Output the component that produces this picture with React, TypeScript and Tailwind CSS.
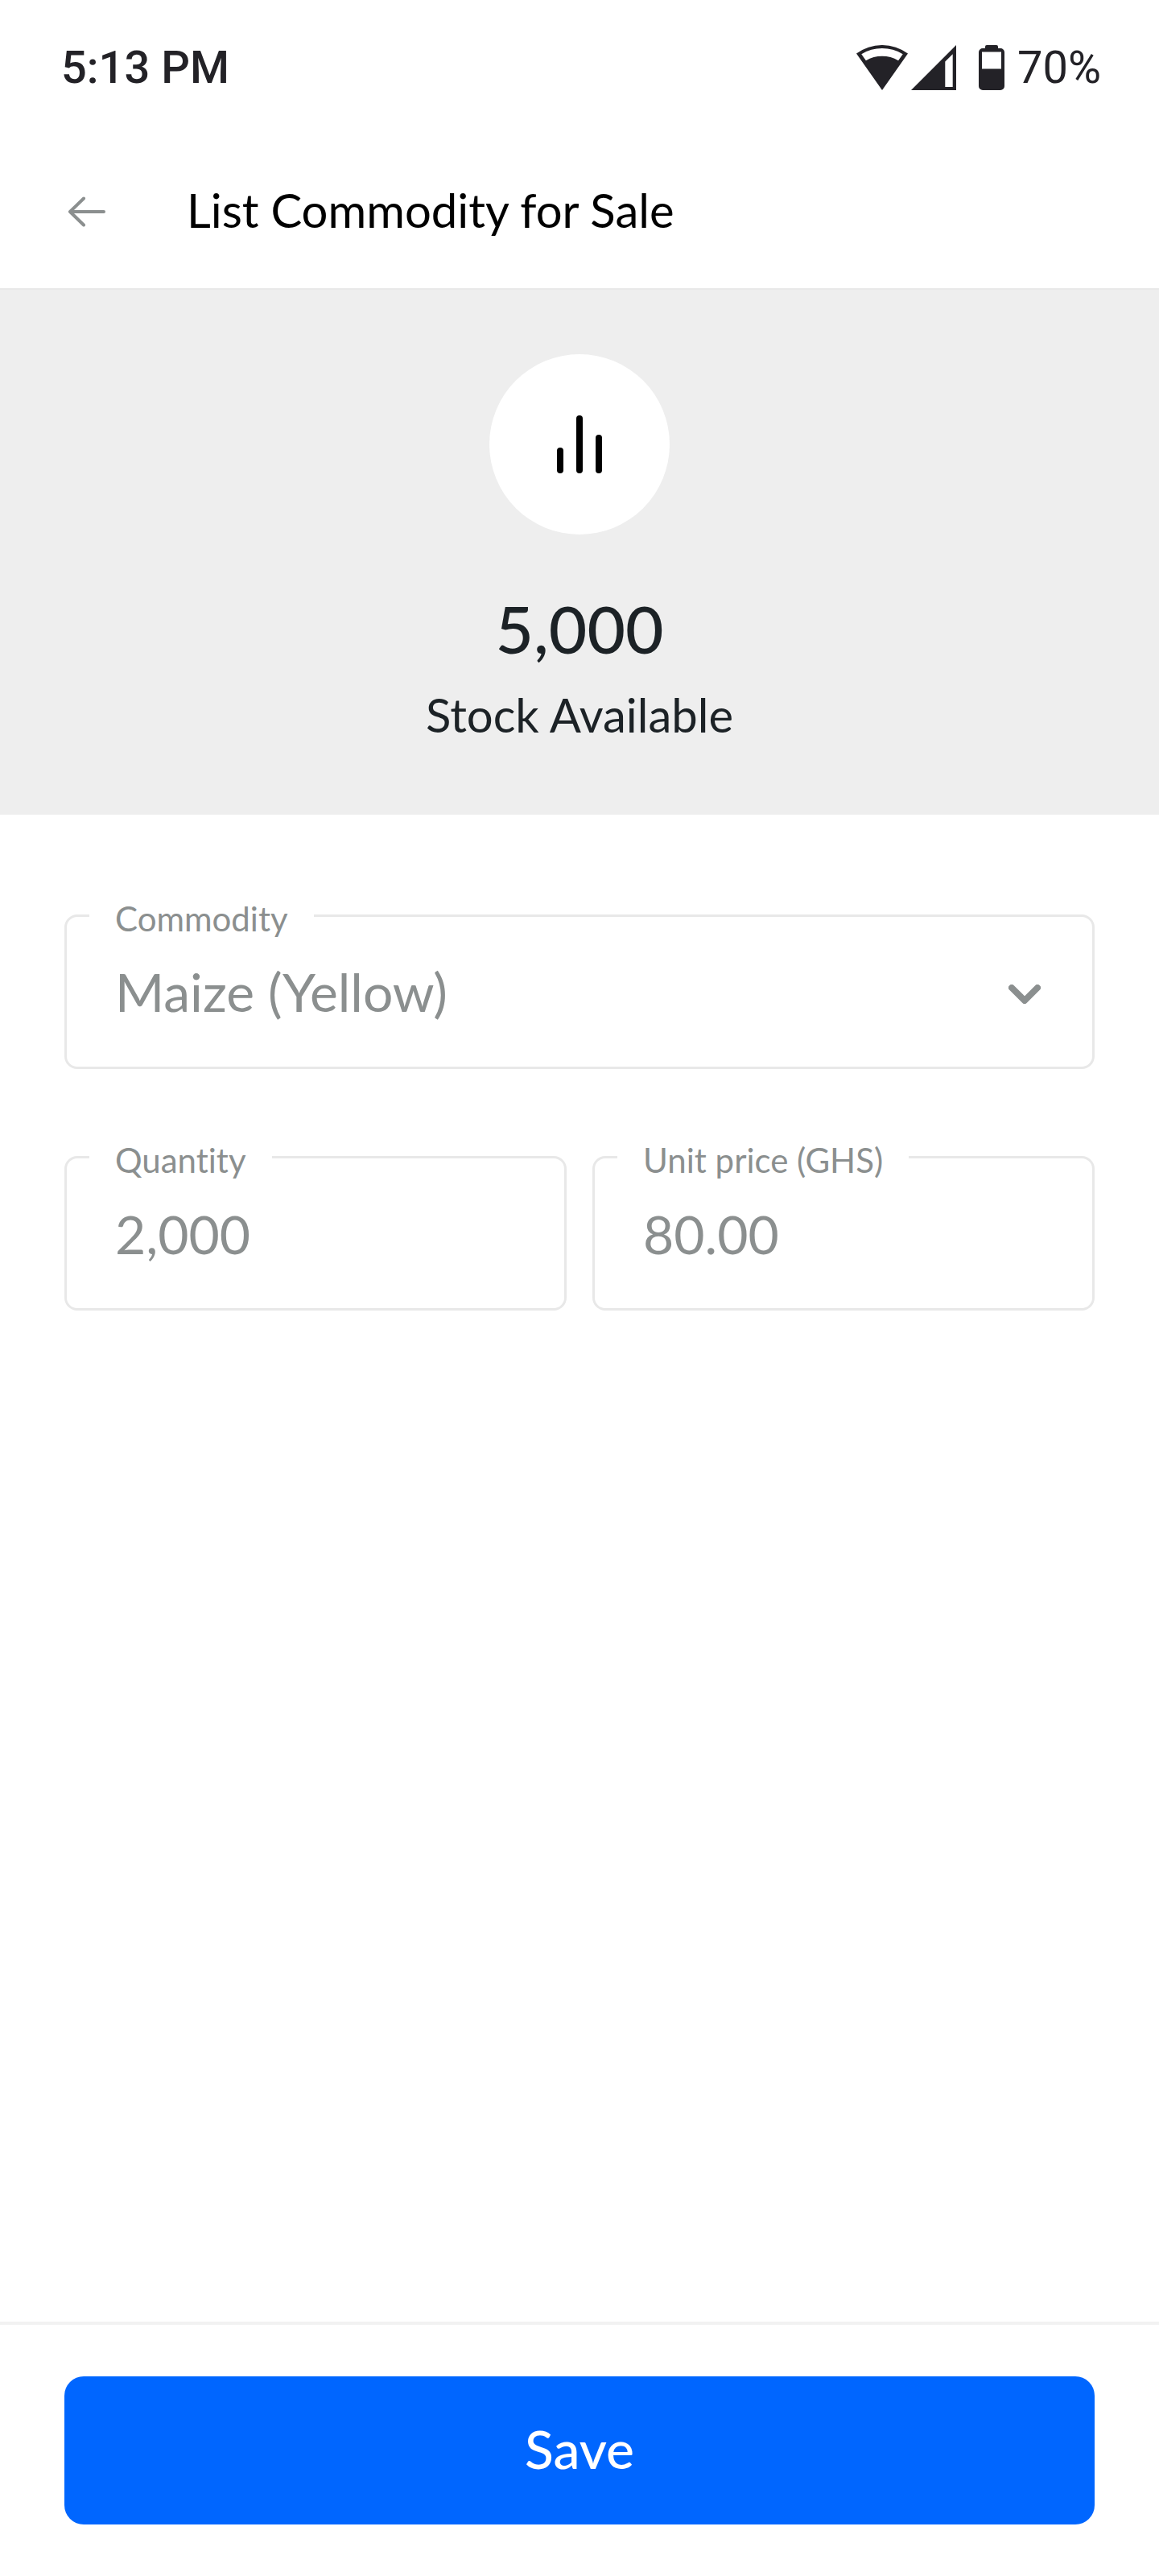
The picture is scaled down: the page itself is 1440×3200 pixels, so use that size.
import React, { useState } from "react";

const WifiIcon: React.FC = () => (
  <svg viewBox="0 0 64 56" className="w-16 h-14" fill="currentColor" aria-hidden="true">
    <path
      fillRule="evenodd"
      d="M32 56 L0 10.5 A54 54 0 0 1 64 10.5 Z M6.3 11.2 L11.9 19.2 A40 40 0 0 1 52.1 19.2 L57.7 11.2 A50 50 0 0 0 6.3 11.2 Z"
    />
  </svg>
);

const SignalIcon: React.FC = () => (
  <svg viewBox="0 0 56 56" className="w-14 h-14" fill="currentColor" aria-hidden="true">
    <path fillRule="evenodd" d="M0 56 L56 0 V56 Z M42.3 20.5 V52 H51.7 V11.2 Z" />
  </svg>
);

const BatteryIcon: React.FC = () => (
  <svg viewBox="0 0 32 56" className="w-8 h-14" fill="currentColor" aria-hidden="true">
    <path
      fillRule="evenodd"
      d="M10 0 H22 A2 2 0 0 1 24 2 V4 H27 A5 5 0 0 1 32 9 V51 A5 5 0 0 1 27 56 H5 A5 5 0 0 1 0 51 V9 A5 5 0 0 1 5 4 H8 V2 A2 2 0 0 1 10 0 Z M4 8.5 V29.5 H28 V8.5 Z"
    />
  </svg>
);

interface FieldProps {
  id: string;
  label: string;
  children: React.ReactNode;
}

const Field: React.FC<FieldProps> = ({ id, label, children }) => (
  <div className="relative flex-1 min-w-0 h-48 border-3 border-[#e8e8e8] rounded-2xl">
    <label htmlFor={id} className="absolute -top-5 left-7 px-8 bg-white text-[42px] leading-11">
      {label}
    </label>
    {children}
  </div>
);

const controlClass =
  "block w-full h-full px-15 text-[66px] leading-20 bg-transparent appearance-none outline-none";

const App: React.FC = () => {
  const [commodity, setCommodity] = useState("Maize (Yellow)");
  const [quantity, setQuantity] = useState("2,000");
  const [price, setPrice] = useState("80.00");

  return (
    <div className="min-h-screen flex flex-col bg-white font-['Lato',sans-serif] [font-variant-ligatures:none]">
      {/* Status bar */}
      <div className="h-42 pl-19 pr-18 flex items-center justify-between text-[#232227] font-['Roboto',sans-serif] text-[56px] leading-none">
        <span className="font-medium">5:13 PM</span>
        <div className="flex items-center">
          <WifiIcon />
          <div className="ml-1">
            <SignalIcon />
          </div>
          <div className="ml-7">
            <BatteryIcon />
          </div>
          <span className="ml-4">70%</span>
        </div>
      </div>

      {/* Header */}
      <header className="h-48 px-20 flex items-center border-b-2 border-[#e8e8e8]">
        <button type="button" aria-label="Back" className="text-[#8b8f8f]">
          <svg viewBox="0 0 56 56" className="w-14 h-14" fill="none" stroke="currentColor" strokeWidth="4" strokeLinecap="round" strokeLinejoin="round">
            <path d="M49 28 H7 M24 11.5 L7 28 L24 44.5" />
          </svg>
        </button>
        <h1 className="ml-24 pb-1 text-[58px] leading-16 text-black">List Commodity for Sale</h1>
      </header>

      {/* Stock summary */}
      <section className="py-20 flex flex-col items-center bg-[#eeeeee] text-[#1c2226]">
        <div className="size-56 rounded-full bg-white flex items-center justify-center">
          <svg viewBox="0 0 56 72" className="w-14 h-18" aria-hidden="true">
            <rect x="0" y="40" width="8" height="32" rx="4" />
            <rect x="24" y="0" width="8" height="72" rx="4" />
            <rect x="48" y="24" width="8" height="48" rx="4" />
          </svg>
        </div>
        <p className="mt-16 text-[82px] leading-26 font-medium">5,000</p>
        <p className="mt-4 mb-1 text-[58px] leading-20">Stock Available</p>
      </section>

      {/* Form */}
      <form id="sale-form" className="pt-31 px-20 flex flex-col gap-27 text-[#8b8f8f]" onSubmit={(e) => e.preventDefault()}>
        <div className="flex">
          <Field id="commodity" label="Commodity">
            <select id="commodity" className={controlClass} value={commodity} onChange={(e) => setCommodity(e.target.value)}>
              <option>Maize (Yellow)</option>
            </select>
            <svg
              viewBox="0 0 40 24"
              className="absolute right-16 top-21 w-10 h-6 pointer-events-none"
              fill="none"
              stroke="currentColor"
              strokeWidth="8"
              strokeLinecap="round"
              strokeLinejoin="round"
              aria-hidden="true"
            >
              <path d="M4 4 L20 20 L36 4" />
            </svg>
          </Field>
        </div>
        <div className="flex gap-8">
          <Field id="quantity" label="Quantity">
            <input id="quantity" type="text" className={controlClass} value={quantity} onChange={(e) => setQuantity(e.target.value)} />
          </Field>
          <Field id="price" label="Unit price (GHS)">
            <input id="price" type="text" className={controlClass} value={price} onChange={(e) => setPrice(e.target.value)} />
          </Field>
        </div>
      </form>

      {/* Footer */}
      <footer className="mt-auto px-20 py-16 border-t-4 border-[#f2f2f2]">
        <button type="submit" form="sale-form" className="w-full h-46 pb-1 rounded-3xl bg-[#0066ff] text-white text-[66px] leading-20 font-medium">
          Save
        </button>
      </footer>
    </div>
  );
};

export default App;
